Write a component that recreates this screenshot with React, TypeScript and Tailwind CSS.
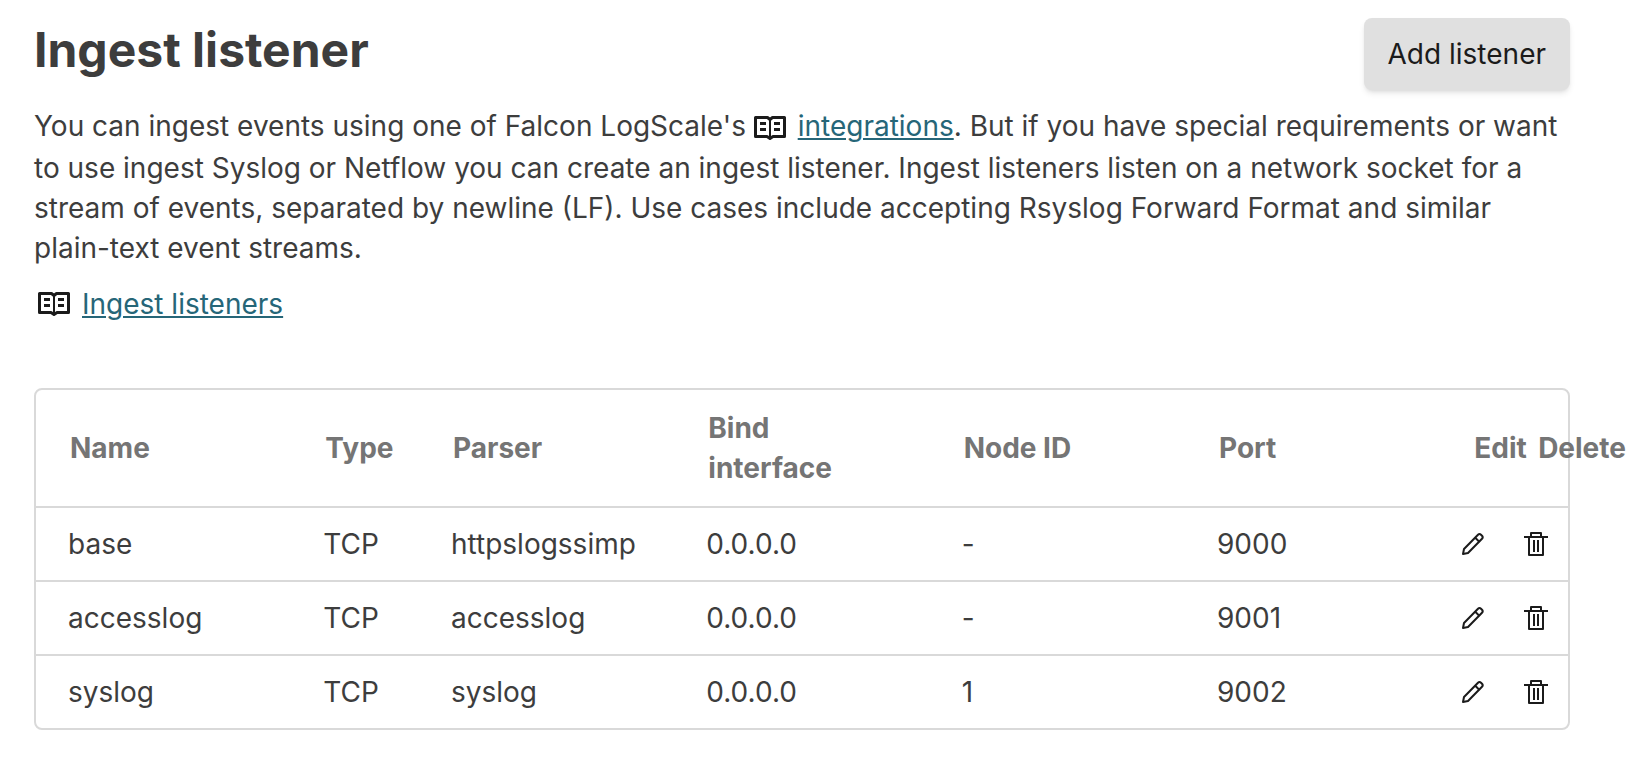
import React from "react";

interface Listener {
  name: string;
  type: string;
  parser: string;
  bindInterface: string;
  nodeId: string;
  port: number;
}

const listeners: Listener[] = [
  {
    name: "base",
    type: "TCP",
    parser: "httpslogssimp",
    bindInterface: "0.0.0.0",
    nodeId: "-",
    port: 9000,
  },
  {
    name: "accesslog",
    type: "TCP",
    parser: "accesslog",
    bindInterface: "0.0.0.0",
    nodeId: "-",
    port: 9001,
  },
  {
    name: "syslog",
    type: "TCP",
    parser: "syslog",
    bindInterface: "0.0.0.0",
    nodeId: "1",
    port: 9002,
  },
];

const columns = ["Name", "Type", "Parser", "Bind interface", "Node ID", "Port"];

const BookIcon = () => (
  <svg
    viewBox="0 0 32 24"
    className="inline-block h-6 w-8 shrink-0 text-[#1b1b1b]"
    fill="none"
    stroke="currentColor"
    aria-hidden="true"
  >
    <path
      d="M16 3.5 13.5 1.5H1.5v19H13l3 2 3-2h11.5v-19H18.5z"
      strokeWidth="3"
      strokeLinejoin="round"
    />
    <path d="M16 3v18" strokeWidth="2" />
    <path d="M6 7.500h6M6 13.500h6M20 7.500h6M20 13.500h6" strokeWidth="3" />
  </svg>
);

const PencilIcon = () => (
  <svg
    viewBox="0 0 24 24"
    className="h-6 w-6"
    fill="none"
    stroke="currentColor"
    strokeWidth="2"
    strokeLinejoin="round"
    aria-hidden="true"
  >
    <path d="M3 22 4 17 18 2.8Q19.500 1.300 21 2.800L22 3.800Q23.500 5.300 22 6.800L8 21z" />
    <path d="M15 5.500l4.500 4.500" />
  </svg>
);

const TrashIcon = () => (
  <svg
    viewBox="0 0 24 24"
    className="h-6 w-6"
    fill="none"
    stroke="currentColor"
    strokeWidth="2"
    strokeLinejoin="round"
    aria-hidden="true"
  >
    <path d="M0 5h24M7 5V1h10v4M5 5v18h14V5M10 8v12M14 8v12" />
  </svg>
);

const linkClass =
  "text-[#266678] underline decoration-2 underline-offset-2 hover:text-[#174350]";

const ListenerTable = () => (
  <table className="w-full table-fixed border-separate border-spacing-0 rounded-lg border-2 border-[#d9d9d9] text-left">
    <colgroup>
      <col className="w-2/12" />
      <col className="w-1/12" />
      <col className="w-2/12" />
      <col className="w-2/12" />
      <col className="w-2/12" />
      <col className="w-2/12" />
      <col className="w-1/24" />
      <col className="w-1/24" />
    </colgroup>
    <thead>
      <tr className="text-[#757575]">
        {columns.map((column) => (
          <th key={column} scope="col" className="py-[18px] pl-[34px] font-bold">
            <span className="block max-w-40">{column}</span>
          </th>
        ))}
        <th scope="col" className="pl-[34px] font-bold whitespace-nowrap">
          Edit
        </th>
        <th scope="col" className="pl-[34px] font-bold whitespace-nowrap">
          Delete
        </th>
      </tr>
    </thead>
    <tbody>
      {listeners.map((listener) => (
        <tr
          key={listener.name}
          className="*:border-t-2 *:border-[#d9d9d9] *:py-4"
        >
          <td className="pl-8">{listener.name}</td>
          <td className="pl-8">{listener.type}</td>
          <td className="pl-8">{listener.parser}</td>
          <td className="pl-8">{listener.bindInterface}</td>
          <td className="pl-8">{listener.nodeId}</td>
          <td className="pl-8">{listener.port}</td>
          <td>
            <button
              type="button"
              aria-label={`Edit ${listener.name}`}
              className="mx-auto block cursor-pointer text-[#1b1b1b]"
            >
              <PencilIcon />
            </button>
          </td>
          <td>
            <button
              type="button"
              aria-label={`Delete ${listener.name}`}
              className="mx-auto block cursor-pointer text-[#1b1b1b]"
            >
              <TrashIcon />
            </button>
          </td>
        </tr>
      ))}
    </tbody>
  </table>
);

const App = () => {
  return (
    <main className="bg-white pt-[18px] pr-[68px] pb-12 pl-[34px] font-[Inter,sans-serif] text-[28px] leading-[40px] text-[#3d3d3d]">
      <header className="flex items-start justify-between">
        <h1 className="text-[48px] leading-[64px] font-bold">
          Ingest listener
        </h1>
        <button
          type="button"
          className="cursor-pointer rounded-lg bg-[#e0e0e0] px-6 py-4 text-[#1b1b1b] shadow-md"
        >
          Add listener
        </button>
      </header>

      <p className="mt-4">
        You can ingest events using one of Falcon LogScale's{" "}
        <span className="mr-1 inline-flex h-10 items-center align-middle">
          <BookIcon />
        </span>{" "}
        <a href="#integrations" className={linkClass}>
          integrations
        </a>
        . But if you have special requirements or want to use ingest Syslog or
        Netflow you can create an ingest listener. Ingest listeners listen on a
        network socket for a stream of events, separated by newline (LF). Use
        cases include accepting Rsyslog Forward Format and similar plain-text
        event streams.
      </p>

      <div className="mt-4 mb-16 flex items-center gap-3 pl-1">
        <BookIcon />
        <a href="#ingest-listeners" className={linkClass}>
          Ingest listeners
        </a>
      </div>

      <ListenerTable />
    </main>
  );
};

export default App;
